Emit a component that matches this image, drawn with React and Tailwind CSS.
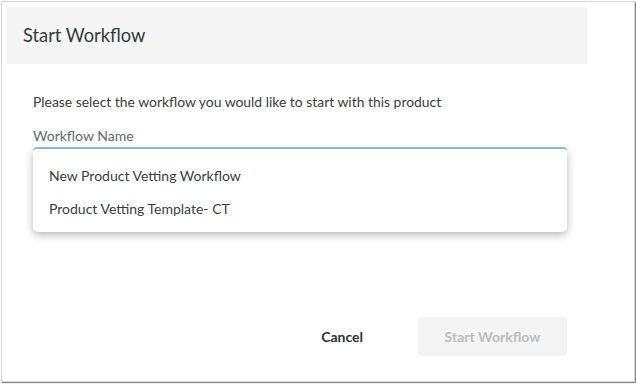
export default function App() {
  const font = { fontFamily: 'Lato, "Noto Sans", sans-serif' };
  return (
    <div className="w-[636px] h-[384px] bg-white" style={font}>
      <div className="ml-[1px] mt-[1px] w-[634px] h-[381px] border border-[#d6d6d6] shadow-[1px_1px_1px_#8a8a8a] p-[5px] flex flex-col">
        <div className="w-[580px] h-[57px] bg-[#f5f5f5] flex items-center pl-[16px]">
          <span className="text-[18.3px] text-[#343a42]">Start Workflow</span>
        </div>
        <div className="pl-[26px] w-[580px] pt-[29px] flex flex-col">
          <p className="text-[13.9px] leading-[17px] text-[#3d3d3d]">Please select the workflow you would like to start with this product</p>
          <label className="mt-[17px] text-[14px] leading-[17px] text-[#666b70]">Workflow Name</label>
          <div className="relative mt-[3px] w-[534px] h-[46px] rounded-[4px] border-t-2 border-x border-[#8ec6dc]">
            <div className="absolute left-[-1px] right-[-1px] top-[0px] h-[83px] bg-white rounded-b-[5px] rounded-t-[3px] shadow-[0_3px_8px_rgba(0,0,0,0.28)] flex flex-col pt-[18px] pl-[16px] gap-[16px]">
              <div className="text-[14px] leading-[17px] text-[#3a3f45]">New Product Vetting Workflow</div>
              <div className="text-[14px] leading-[17px] text-[#3a3f45]">Product Vetting Template- CT</div>
            </div>
          </div>
        </div>
        <div className="mt-auto mb-[20px] flex items-center justify-end pr-[62px]">
          <button className="text-[14px] font-bold text-[#2e3338] mr-[55px]">Cancel</button>
          <button className="w-[149px] h-[39px] rounded-[4px] bg-[#f4f4f4] text-[14px] font-bold text-[#bcbcbc]">Start Workflow</button>
        </div>
      </div>
    </div>
  );
}
